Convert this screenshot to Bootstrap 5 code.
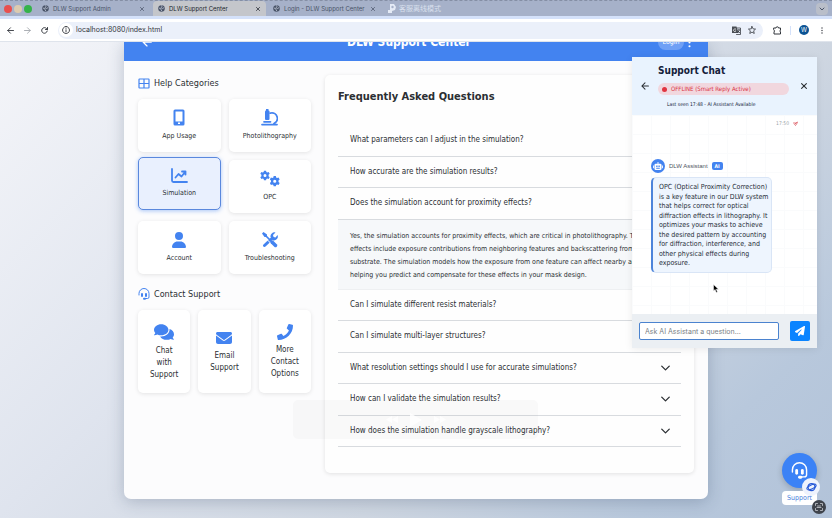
<!DOCTYPE html>
<html lang="en">
<head>
<meta charset="utf-8">
<meta name="viewport" content="width=device-width, initial-scale=1">
<title>DLW Support Center</title>
<link href="https://cdn.jsdelivr.net/npm/bootstrap@5.3.0/dist/css/bootstrap.min.css" rel="stylesheet">
<style>
:root { --blue: #4383f0; --ui: "DejaVu Sans Condensed", "DejaVu Sans", "Noto Sans", sans-serif; }
body { font-family: var(--ui); font-size: 8px; line-height: 12px; color: #2b2f33; }
svg { display: block; flex-shrink: 0; }
button, input { font: inherit; color: inherit; }
.plain { border: 0; background: none; padding: 0; }
.ln { fill: none; stroke: currentColor; stroke-linecap: round; stroke-linejoin: round; }

/* browser window */
.tabstrip { height: 16px; background: #a6b1c9; border-top: 1px dashed #858fa5; font: 6px/14px Inter, "Noto Sans CJK SC", sans-serif; color: #4a5468; }
.lights { width: 42px; padding-left: 4px; gap: 2px; }
.light { width: 8px; height: 8px; border-radius: 50%; }
.light.red { background: #e8504f; }
.light.amber { background: #dccbb0; }
.light.green { background: #35b34a; }
.tab { width: 111px; padding: 0 9px 0 0; gap: 4px; }
.tab.current { width: 113px; background: #c4c6cb; border-radius: 4px 4px 0 0; color: #22262e; padding: 0 6px 0 5px; }
.tab.third { width: 118px; padding: 0 9px 0 7px; }
.lastmode { color: #d9e0ee; font-size: 7px; gap: 3px; padding-left: 4px; }
.seam { height: 3px; background: #d4e1fa; }
.toolbar { height: 23px; font: 7px/12px Inter, sans-serif; color: #33373d; border-bottom: 1px solid #dfe4ec; padding: 0 9px 0 7px; gap: 10px; }
.address { background: #ebf0fa; height: 17px; border-radius: 9px; padding: 0 7px 0 1px; gap: 7px; }
.address input { border: 0; background: none; outline: 0; padding: 0; min-width: 0; }
.info { width: 14px; height: 14px; background: #fff; border-radius: 50%; margin-right: -4px; }
.tools { gap: 8px; }
.split { width: 1px; height: 9px; background: #d4e1fa; }
.avatar { width: 10px; height: 10px; border-radius: 50%; background: #0b5394; color: #fff; font-size: 6px; margin-right: 4px; }

/* page */
.viewport { background: linear-gradient(135deg, #f4f5f9 0%, #dfe4ee 36%, #ced6e1 64%, #b8c8dc 85%, #b2c3d9 100%); }
.sheet { width: 584px; background: #fcfcfd; border-radius: 0 0 7px 7px; box-shadow: 0 3px 16px rgba(40,60,90,.25); }
.hero { height: 19px; background: var(--blue); color: #fff; }
.hero-row { margin-top: -9px; height: 18px; padding: 0 17px 0 18px; }
.hero h1 { font-size: 12px; line-height: 18px; font-weight: 700; }
.login { background: #70a0f5; border-radius: 8px; color: #fff; height: 15px; width: 26px; font-size: 7px; }
.content { padding: 14px 14px 26px; gap: 14px; }
.sidebar { width: 173px; }
.heading { font-size: 9px; line-height: 16px; font-weight: 400; gap: 4px; }
.heading.second { margin-top: 12px; }
.blue { color: var(--blue); }
.topics { display: grid; grid-template-columns: 1fr 1fr; gap: 8px; }
.contacts { display: grid; grid-template-columns: 1fr 1fr 1fr; gap: 8px; }
.tile { border: 0; background: #fff; border-radius: 5px; box-shadow: 0 1px 4px rgba(0,0,0,.1); padding: 0 4px; line-height: 12px; gap: 4px; }
.topics .tile { height: 53px; font-size: 7px; }
.tile.active { background: #e9f0fe; border: 1px solid #5a88dd; box-shadow: 0 1px 4px rgba(67,131,240,.45); transform: translateY(-3px); }
.contacts .tile { height: 83px; }
.faq { background: #fefefe; border-radius: 5px; box-shadow: 0 1px 4px rgba(0,0,0,.11); padding: 12px 13px 26px; min-width: 0; }
.faq h2 { font-size: 11px; line-height: 20px; font-weight: 700; margin-bottom: 18px; }
.faqlist { min-height: 322px; }
.question { flex: 1 0 auto; border: 0; border-bottom: 1px solid #d8dbdf; background: none; padding: 0 11px 0 12px; text-align: left; }
.answer { background: #f6f8fa; padding: 10px 12px; height: 70px; font-size: 7px; line-height: 13px; border-bottom: 1px solid #eef0f2; }

/* chat */
.chat { position: absolute; top: 15px; right: 15px; width: 185px; height: 291px; background: #fff; box-shadow: 0 1px 8px rgba(0,0,0,.08); }
.chat-head { height: 58px; background: #e9f3fe; padding: 0 10px 0 9px; gap: 9px; }
.chat-head h2 { font-size: 10px; line-height: 16px; font-weight: 700; color: #14213a; }
.status { background: #f1d7de; color: #d9313f; border-radius: 6px; font-size: 6px; line-height: 12px; padding: 0 4px; gap: 4px; margin-right: 3px; }
.dot { width: 5px; height: 5px; border-radius: 50%; background: #e03440; }
.seen { font-size: 5px; line-height: 10px; color: #14213a; padding-left: 9px; }
.chat-body { padding: 4px 19px; background-image: linear-gradient(90deg, #fafbfc 1px, transparent 1px), linear-gradient(#fafbfc 1px, transparent 1px); background-size: 19px 19px; }
.stamp { font-size: 5px; line-height: 8px; color: #9a9fa8; }
.bot { width: 14px; height: 14px; border-radius: 50%; background: var(--blue); color: #fff; }
.botname { font: 6px/10px "Liberation Sans", sans-serif; color: #50555e; }
.ai { background: var(--blue); color: #fff; border-radius: 2px; font-size: 5px; line-height: 8px; padding: 0 3px; font-weight: 700; }
.bubble { width: 121px; min-height: 96px; display: grid; align-content: space-between; background: #eef5fe; border: 1px solid #d9e5f6; border-left: 2px solid #4d84da; border-radius: 5px; padding: 5px 0 4px 6px; font-size: 7px; line-height: 9px; color: #272d38; margin-top: 4px; white-space: nowrap; }
.chat-foot { height: 34px; background: #ebeff3; padding: 0 7px; gap: 11px; }
.chat-foot input { height: 18px; min-width: 0; border: 1px solid #4b83cf; border-radius: 2px; padding: 0 5px; background: #fff; font: 7px Inter, sans-serif; }
.chat-foot input::placeholder { color: #7a7f86; opacity: 1; }
.send { background: #0a84ff; color: #fff; width: 20px; height: 20px; border-radius: 2px; }

/* items floating above the page */
.pointer { position: absolute; left: 713px; top: 242px; }
.player { position: absolute; left: 293px; top: 358px; width: 245px; height: 39px; border-radius: 5px; background: rgba(120,120,120,.035); color: rgba(255,255,255,.85); gap: 12px; }
.support { position: absolute; right: 15px; bottom: 13px; }
.fab { width: 35px; height: 35px; border-radius: 50%; background: #3b82f6; color: #fff; box-shadow: 0 2px 6px rgba(0,0,0,.2); }
.support-label { background: #fff; color: #4a7fdc; border-radius: 4px; width: 35px; line-height: 14px; font-size: 7px; margin-top: 3px; }
.planet { position: absolute; right: 12px; bottom: 22px; width: 18px; height: 18px; border-radius: 50%; background: #eef3fd; color: #2457d6; }
.scan { position: absolute; right: 6px; bottom: 4px; width: 14px; height: 14px; border-radius: 50%; background: #3f444c; color: #c9ccd1; }
</style>
<script src="https://cdn.jsdelivr.net/npm/bootstrap@5.3.0/dist/js/bootstrap.bundle.min.js"></script>
</head>
<body class="vh-100 d-flex flex-column overflow-hidden">
<svg class="d-none">
  <symbol id="globe" viewBox="0 0 16 16"><circle cx="8" cy="8" r="7.500" fill="#4a5468"/><path d="M2 7l4 1 1 3 2 3M8 1l1 3-2 2 3 2 4-2" fill="none" stroke="#b9c1d1" stroke-width="2"/></symbol>
  <symbol id="cross" viewBox="0 0 10 10"><path class="ln" stroke-width="1.800" d="M1 1l8 8M9 1L1 9"/></symbol>
  <symbol id="down" viewBox="0 0 12 8"><path class="ln" stroke-width="1.700" d="M1 1.500l5 5 5-5"/></symbol>
  <symbol id="left" viewBox="0 0 14 14"><path class="ln" stroke-width="1.800" d="M13 7H1.500M7 1.500L1.500 7 7 12.500"/></symbol>
  <symbol id="dots" viewBox="0 0 4 14"><g fill="currentColor"><circle cx="2" cy="2" r="1.400"/><circle cx="2" cy="7" r="1.400"/><circle cx="2" cy="12" r="1.400"/></g></symbol>
  <symbol id="headset" viewBox="0 0 24 24"><path class="ln" stroke-width="2" d="M2 14v-3a10 10 0 0 1 20 0v7a3 3 0 0 1-3 3h-5"/><rect x="6" y="10" width="4" height="8" rx="2" fill="currentColor"/><rect x="14" y="10" width="4" height="8" rx="2" fill="currentColor"/><rect x="10" y="19.500" width="6" height="4" rx="2" fill="currentColor"/></symbol>
  <symbol id="gear" viewBox="0 0 16 16"><path fill="currentColor" fill-rule="evenodd" d="M6.300 0h3.400l.4 2.300 1.500.9 2.200-.9 1.700 3-1.800 1.500v2.400l1.800 1.500-1.700 3-2.200-.9-1.500.9-.4 2.300H6.300l-.4-2.300-1.500-.9-2.200.9-1.700-3 1.800-1.500V6.800L.5 5.300l1.700-3 2.200.9 1.500-.9zM8 5.600a2.400 2.400 0 1 0 0 4.800 2.400 2.400 0 0 0 0-4.800z"/></symbol>
</svg>

<div class="tabstrip d-flex flex-shrink-0">
  <div class="lights d-flex align-items-center flex-shrink-0">
    <span class="light red"></span><span class="light amber"></span><span class="light green"></span>
  </div>
  <div class="tab d-flex align-items-center flex-shrink-0"><svg width="7" height="7"><use href="#globe"/></svg><span class="flex-grow-1 text-nowrap">DLW Support Admin</span><button class="plain" aria-label="Close tab"><svg width="4" height="4"><use href="#cross"/></svg></button></div>
  <div class="tab current d-flex align-items-center flex-shrink-0"><svg width="7" height="7"><use href="#globe"/></svg><span class="flex-grow-1 text-nowrap">DLW Support Center</span><button class="plain" aria-label="Close tab"><svg width="4" height="4"><use href="#cross"/></svg></button></div>
  <div class="tab third d-flex align-items-center flex-shrink-0"><svg width="7" height="7"><use href="#globe"/></svg><span class="flex-grow-1 text-nowrap">Login - DLW Support Center</span><button class="plain" aria-label="Close tab"><svg width="4" height="4"><use href="#cross"/></svg></button></div>
  <div class="lastmode d-flex align-items-center text-nowrap"><svg width="8" height="9" viewBox="0 0 8 9"><path fill="#e5ebf6" d="M2 0h4l2 3-1 3-3 1v2H0V6h2z"/><circle cx="4.500" cy="3" r="1.200" fill="#a6b1c9"/></svg><span>客服离线模式</span></div>
  <button class="plain ms-auto me-1" aria-label="Search tabs"><svg width="12" height="12" viewBox="0 0 12 12"><rect width="12" height="12" rx="4" fill="#b9bec9"/><path class="ln" d="M4 5l2 2 2-2"/></svg></button>
</div>
<div class="seam flex-shrink-0"></div>
<div class="toolbar d-flex align-items-center flex-shrink-0 bg-white">
  <button class="plain" aria-label="Back"><svg width="7" height="7"><use href="#left"/></svg></button>
  <button class="plain" aria-label="Forward"><svg width="7" height="7" viewBox="0 0 14 14" color="#a3a7ad"><path class="ln" stroke-width="1.800" d="M1 7h11.500M7 1.500L12.500 7 7 12.500"/></svg></button>
  <button class="plain" aria-label="Reload"><svg width="7" height="7" viewBox="0 0 14 14"><path class="ln" stroke-width="1.900" d="M12.500 8A5.600 5.600 0 1 1 11 3l2 2M13 1v4H9"/></svg></button>
  <div class="address d-flex align-items-center flex-grow-1">
    <span class="info d-flex align-items-center justify-content-center"><svg width="8" height="8" viewBox="0 0 16 16"><path class="ln" stroke-width="1.800" d="M8 1a7 7 0 1 0 .1 0zM8 7.500v4M8 4.500v.2"/></svg></span>
    <input class="flex-grow-1" aria-label="Address" value="localhost:8080/index.html">
    <svg width="9" height="9" viewBox="0 0 18 18"><path fill="#4a4e55" d="M0 1h9l4 13H0z"/><path class="ln" stroke-width="1.500" d="M10 4h7v13H9M12 8h4M14 7v2l-2 4M12 10l4 4"/><path stroke="#fff" fill="none" stroke-width="1.500" d="M8 6H5.500a2.500 2.500 0 1 0 2 4H6"/></svg>
    <svg width="8" height="8" viewBox="0 0 16 16"><path class="ln" stroke-width="1.600" d="M8 1l2.100 4.700 5 .5-3.800 3.400L12.500 15 8 12.200 3.500 15l1.200-5.400L.9 6.200l5-.5z"/></svg>
  </div>
  <div class="tools d-flex align-items-center">
    <svg width="9" height="9" viewBox="0 0 18 18"><path class="ln" stroke-width="2" d="M2 4h4a2.500 2.500 0 0 1 5 0h4v4a2.500 2.500 0 0 0 0 4v4H2v-4a2.500 2.500 0 0 0 0-4z"/></svg>
    <span class="split"></span>
    <span class="avatar d-flex align-items-center justify-content-center">W</span>
    <button class="plain" aria-label="Browser menu"><svg width="2" height="7"><use href="#dots"/></svg></button>
  </div>
</div>

<div class="viewport position-relative flex-grow-1 overflow-hidden">
  <main class="sheet mx-auto">
    <header class="hero overflow-hidden">
      <div class="hero-row d-flex align-items-center">
        <button class="plain text-white" aria-label="Back"><svg width="10" height="10"><use href="#left"/></svg></button>
        <h1 class="flex-grow-1 text-center mb-0 ps-2">DLW Support Center</h1>
        <button class="plain login">Login</button>
        <button class="plain text-white ms-1" aria-label="Menu"><svg width="3" height="11"><use href="#dots"/></svg></button>
      </div>
    </header>
    <div class="content d-flex">
      <section class="sidebar flex-shrink-0">
        <h2 class="heading d-flex align-items-center mb-2"><svg class="blue" width="12" height="11" viewBox="0 0 24 22"><path class="ln" stroke-width="2.400" d="M3 2h18q1 0 1 1v16q0 1-1 1H3q-1 0-1-1V3q0-1 1-1zM12 2v18M2 11h20"/></svg>Help Categories</h2>
        <div class="topics">
          <button class="tile d-flex flex-column align-items-center justify-content-center"><svg class="blue" width="12" height="17" viewBox="0 0 24 34"><path fill="currentColor" fill-rule="evenodd" d="M4 1h16a3 3 0 0 1 3 3v26a3 3 0 0 1-3 3H4a3 3 0 0 1-3-3V4a3 3 0 0 1 3-3zm1 4v20h14V5zm5 22v3h4v-3z"/></svg>App Usage</button>
          <button class="tile d-flex flex-column align-items-center justify-content-center"><svg class="blue" width="17" height="17" viewBox="0 0 34 34"><rect x="8" y="3" width="9" height="19" rx="2" fill="currentColor"/><rect x="10" y="0" width="5" height="5" fill="currentColor"/><path class="ln" stroke-width="3.500" d="M18 8h2a11 11 0 0 1 6 21M2 31h30M6 25.500h13"/></svg>Photolithography</button>
          <button class="tile active d-flex flex-column align-items-center justify-content-center"><svg class="blue" width="17" height="15" viewBox="0 0 34 30"><path class="ln" stroke-width="3.600" d="M2 2v23q0 3 3 3h27M9 19l6-7 6 5 8-10M22 7h7v6"/></svg>Simulation</button>
          <button class="tile d-flex flex-column align-items-center justify-content-center"><svg class="blue" width="20" height="17" viewBox="0 0 40 34"><use href="#gear" x="0" y="1" width="20" height="20"/><use href="#gear" x="19" y="12" width="21" height="21"/></svg>OPC</button>
          <button class="tile d-flex flex-column align-items-center justify-content-center"><svg class="blue" width="14" height="16" viewBox="0 0 448 512"><path fill="currentColor" d="M224 256A128 128 0 1 0 224 0a128 128 0 1 0 0 256zm-45.700 48C79.800 304 0 383.800 0 482.300C0 498.700 13.300 512 29.700 512H418.300c16.400 0 29.700-13.300 29.700-29.700C448 383.800 368.200 304 269.700 304H178.300z"/></svg>Account</button>
          <button class="tile d-flex flex-column align-items-center justify-content-center"><svg class="blue" width="16" height="16" viewBox="0 0 32 32"><path class="ln" stroke-width="6" d="M5 27L21 12"/><path fill="currentColor" d="M17 10a8 8 0 0 1 10-9l-5 5 1 4 4 1 4-5a8 8 0 0 1-9 11z"/><path stroke="#fff" stroke-width="2" fill="none" d="M7 12l14 14"/><path class="ln" stroke-width="3.500" d="M6 6l10 10"/><path class="ln" stroke-width="7" d="M20 20l7 7"/><path fill="currentColor" d="M0 3l3-3 7 5v5H5z"/></svg>Troubleshooting</button>
        </div>
        <h2 class="heading second d-flex align-items-center mb-2"><svg class="blue" width="12" height="12"><use href="#headset"/></svg>Contact Support</h2>
        <div class="contacts">
          <button class="tile d-flex flex-column align-items-center justify-content-center"><svg class="blue" width="20" height="18" viewBox="0 0 576 512"><path fill="currentColor" d="M416 192c0-88.400-93.100-160-208-160S0 103.600 0 192c0 34.300 14.100 65.900 38 92-13.400 30.200-35.500 54.200-35.800 54.500-2.200 2.300-2.800 5.700-1.500 8.700S4.800 352 8 352c36.600 0 66.900-12.300 88.700-25 32.200 15.700 70.300 25 111.300 25 114.900 0 208-71.600 208-160zm122 220c23.900-26 38-57.700 38-92 0-66.900-53.500-124.200-129.300-148.100.9 6.600 1.300 13.300 1.300 20.100 0 105.900-107.700 192-240 192-10.800 0-21.300-.8-31.700-1.900C207.800 439.600 281.800 480 368 480c41 0 79.100-9.200 111.300-25 21.800 12.700 52.100 25 88.700 25 3.200 0 6.100-1.900 7.300-4.800 1.300-2.900.7-6.300-1.500-8.700-.3-.3-22.400-24.200-35.800-54.500z"/></svg><span>Chat<br>with<br>Support</span></button>
          <button class="tile d-flex flex-column align-items-center justify-content-center"><svg class="blue" width="16" height="16" viewBox="0 0 512 512"><path fill="currentColor" d="M48 64C21.500 64 0 85.500 0 112c0 15.100 7.100 29.300 19.200 38.400L236.800 313.600c11.400 8.500 27 8.500 38.400 0L492.800 150.400c12.100-9.100 19.200-23.300 19.200-38.400c0-26.500-21.500-48-48-48L48 64zM0 176V384c0 35.300 28.700 64 64 64H448c35.300 0 64-28.700 64-64V176L294.400 339.200c-22.800 17.100-54 17.100-76.800 0L0 176z"/></svg><span>Email<br>Support</span></button>
          <button class="tile d-flex flex-column align-items-center justify-content-center"><svg class="blue" width="16" height="16" viewBox="0 0 512 512"><path fill="currentColor" d="M493.400 24.600l-104-24c-11.300-2.600-22.900 3.300-27.500 13.900l-48 112c-4.200 9.800-1.400 21.300 6.900 28l60.600 49.600c-36 76.700-98.900 140.500-177.200 177.200l-49.600-60.600c-6.800-8.300-18.200-11.100-28-6.900l-112 48C3.900 366.500-2 378.100.6 389.400l24 104C27.100 504.200 36.700 512 48 512c256.100 0 464-207.500 464-464 0-11.200-7.700-20.900-18.600-23.400z"/></svg><span>More<br>Contact<br>Options</span></button>
        </div>
      </section>
      <section class="faq flex-grow-1">
        <h2>Frequently Asked Questions</h2>
        <div class="faqlist d-flex flex-column">
          <button class="question d-flex align-items-center justify-content-between">What parameters can I adjust in the simulation?<svg width="9" height="6"><use href="#down"/></svg></button>
          <button class="question d-flex align-items-center justify-content-between">How accurate are the simulation results?<svg width="9" height="6"><use href="#down"/></svg></button>
          <button class="question d-flex align-items-center justify-content-between" aria-expanded="true">Does the simulation account for proximity effects?<svg width="9" height="6"><use href="#down"/></svg></button>
          <div class="answer text-nowrap"><div>Yes, the simulation accounts for proximity effects, which are critical in photolithography. These</div><div>effects include exposure contributions from neighboring features and backscattering from the</div><div>substrate. The simulation models how the exposure from one feature can affect nearby areas,</div><div>helping you predict and compensate for these effects in your mask design.</div></div>
          <button class="question d-flex align-items-center justify-content-between">Can I simulate different resist materials?<svg width="9" height="6"><use href="#down"/></svg></button>
          <button class="question d-flex align-items-center justify-content-between">Can I simulate multi-layer structures?<svg width="9" height="6"><use href="#down"/></svg></button>
          <button class="question d-flex align-items-center justify-content-between">What resolution settings should I use for accurate simulations?<svg width="9" height="6"><use href="#down"/></svg></button>
          <button class="question d-flex align-items-center justify-content-between">How can I validate the simulation results?<svg width="9" height="6"><use href="#down"/></svg></button>
          <button class="question d-flex align-items-center justify-content-between">How does the simulation handle grayscale lithography?<svg width="9" height="6"><use href="#down"/></svg></button>
        </div>
      </section>
    </div>
  </main>

  <div class="player d-flex align-items-center justify-content-center" aria-hidden="true">
    <svg width="12" height="7" viewBox="0 0 12 7"><path fill="currentColor" d="M6 0v7L0 3.500zM12 0v7L6 3.500z"/></svg>
    <svg width="12" height="14" viewBox="0 0 12 14"><path fill="currentColor" d="M0 0l12 7-12 7z"/></svg>
    <svg width="12" height="7" viewBox="0 0 12 7"><path fill="currentColor" d="M0 0v7l6-3.500zM6 0v7l6-3.500z"/></svg>
  </div>

  <aside class="chat d-flex flex-column">
    <div class="chat-head d-flex align-items-center">
      <button class="plain" aria-label="Back to page"><svg width="8" height="8"><use href="#left"/></svg></button>
      <div class="flex-grow-1">
        <h2 class="mb-1">Support Chat</h2>
        <div class="status d-flex align-items-center"><span class="dot"></span>OFFLINE (Smart Reply Active)</div>
        <div class="seen mt-1">Last seen 17:48 - AI Assistant Available</div>
      </div>
      <button class="plain" aria-label="Close chat"><svg width="6" height="6"><use href="#cross"/></svg></button>
    </div>
    <div class="chat-body flex-grow-1">
      <div class="stamp d-flex justify-content-end align-items-center gap-1">17:50 <svg width="5" height="5" viewBox="0 0 10 10" color="#d9505a"><path class="ln" stroke-width="1.500" d="M1 4h4M3 7l5-5M5 9l4-6"/></svg></div>
      <div class="d-flex align-items-center gap-1 mt-4 pt-2"><span class="bot d-flex align-items-center justify-content-center"><svg width="10" height="8" viewBox="0 0 22 18"><path fill="currentColor" fill-rule="evenodd" d="M10 0h2v4h4a3 3 0 0 1 3 3v8a3 3 0 0 1-3 3H6a3 3 0 0 1-3-3V7a3 3 0 0 1 3-3h4zM0 8h2v6H0zm20 0h2v6h-2zM7 8v3h3V8zm5 0v3h3V8zm-5 5v2h8v-2z"/></svg></span><span class="botname">DLW Assistant</span><span class="ai">AI</span></div>
      <div class="bubble"><div>OPC (Optical Proximity Correction)</div><div>is a key feature in our DLW system</div><div>that helps correct for optical</div><div>diffraction effects in lithography. It</div><div>optimizes your masks to achieve</div><div>the desired pattern by accounting</div><div>for diffraction, interference, and</div><div>other physical effects during</div><div>exposure.</div></div>
    </div>
    <form class="chat-foot d-flex align-items-center">
      <input type="text" class="flex-grow-1" aria-label="Message" placeholder="Ask AI Assistant a question...">
      <button type="button" class="plain send d-flex align-items-center justify-content-center" aria-label="Send"><svg width="10" height="10" viewBox="0 0 512 512"><path fill="currentColor" d="M498.100 5.600c10.100 7 15.400 19.100 13.500 31.200l-64 416c-1.500 9.700-7.400 18.200-16 23s-18.900 5.400-28 1.600L284 427.700l-68.500 74.100c-8.900 9.700-22.900 12.900-35.200 8.100S160 493.200 160 480V396.400c0-4 1.500-7.800 4.200-10.700L331.800 202.800c5.800-6.300 5.600-16-.4-22s-15.700-6.400-22-.7L106 360.800 17.700 316.600C7.100 311.300.3 300.700 0 288.900s5.900-22.800 16.100-28.700l448-256c10.700-6.100 23.900-5.500 34 1.400z"/></svg></button>
    </form>
  </aside>

  <svg class="pointer" width="6" height="9" viewBox="0 0 12 18"><path fill="#000" stroke="#fff" d="M1 1v13l3-3 2.500 6 2.500-1-2.500-5.500H11z"/></svg>

  <div class="support d-flex flex-column align-items-center">
    <button class="plain fab d-flex align-items-center justify-content-center" aria-label="Open support chat"><svg width="17" height="17"><use href="#headset"/></svg></button>
    <span class="support-label text-center">Support</span>
  </div>
  <span class="planet d-flex align-items-center justify-content-center"><svg width="11" height="10" viewBox="0 0 22 20"><circle class="ln" cx="11" cy="10" r="7" stroke-width="2.500"/><ellipse class="ln" cx="11" cy="10" rx="10" ry="4" stroke-width="2" transform="rotate(-25 11 10)"/></svg></span>
  <button class="plain scan d-flex align-items-center justify-content-center" aria-label="Scan"><svg width="8" height="8" viewBox="0 0 16 16"><path class="ln" stroke-width="1.600" d="M1 5V1h4M11 1h4v4M15 11v4h-4M5 15H1v-4M5 6h6M4 9h8"/></svg></button>
</div>
</body>
</html>
